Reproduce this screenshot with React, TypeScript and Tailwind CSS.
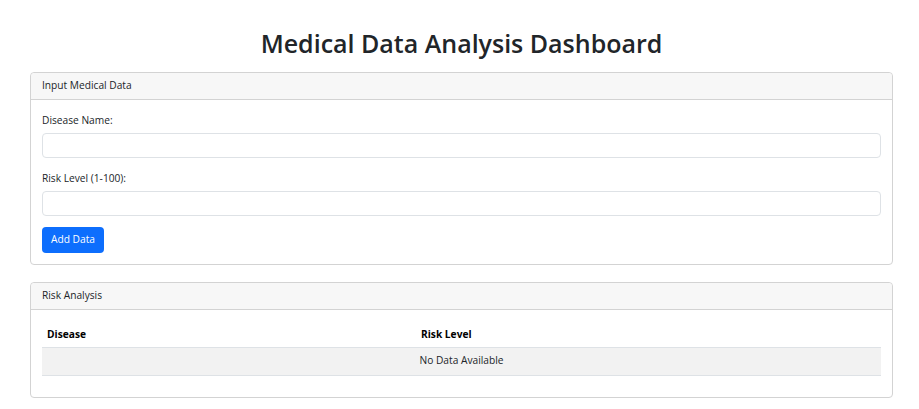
export default function App() {
  return (
    <div className="min-h-screen bg-white text-[#212529] font-['Open_Sans',sans-serif]">
      <div className="ml-[30px] mr-[26px] pt-[23px]">
        <h1 className="text-center text-[25px] leading-[40px] font-semibold mb-[9px]">
          Medical Data Analysis Dashboard
        </h1>

        <div className="border border-[#d3d3d3] rounded-[4px] mb-[17px]">
          <div className="h-[27px] px-[11px] flex items-center bg-[#f7f7f7] border-b border-[#d3d3d3] rounded-t-[4px] text-[10.2px]">
            Input Medical Data
          </div>
          <div className="p-[11px] flex flex-col items-start">
            <label className="block text-[10.2px] leading-[18px] mb-[4px]">Disease Name:</label>
            <input
              type="text"
              className="block w-full h-[25px] border border-[#dee2e6] rounded-[4px] mb-[11px] outline-none"
            />
            <label className="block text-[10.2px] leading-[18px] mb-[4px]">Risk Level (1-100):</label>
            <input
              type="number"
              className="block w-full h-[25px] border border-[#dee2e6] rounded-[4px] mb-[11px] outline-none"
            />
            <button className="block h-[26px] w-[62px] rounded-[4px] bg-[#0d6efd] text-white text-[10.2px]">
              Add Data
            </button>
          </div>
        </div>

        <div className="border border-[#d3d3d3] rounded-[4px]">
          <div className="h-[27px] px-[11px] flex items-center bg-[#f7f7f7] border-b border-[#d3d3d3] rounded-t-[4px] text-[10.2px]">
            Risk Analysis
          </div>
          <div className="px-[11px] pt-[12px] pb-[21px]">
            <table className="w-full border-collapse text-[10.2px]">
              <thead>
                <tr className="h-[25px] border-b border-[#dee2e6]">
                  <th className="w-[374px] text-left font-bold px-[5px] text-black">Disease</th>
                  <th className="text-left font-bold px-[5px] text-black">Risk Level</th>
                </tr>
              </thead>
              <tbody>
                <tr className="h-[28px] bg-[#f2f2f2] border-b border-[#dee2e6]">
                  <td colSpan={2} className="text-center px-[5px]">
                    No Data Available
                  </td>
                </tr>
              </tbody>
            </table>
          </div>
        </div>
      </div>
    </div>
  );
}
